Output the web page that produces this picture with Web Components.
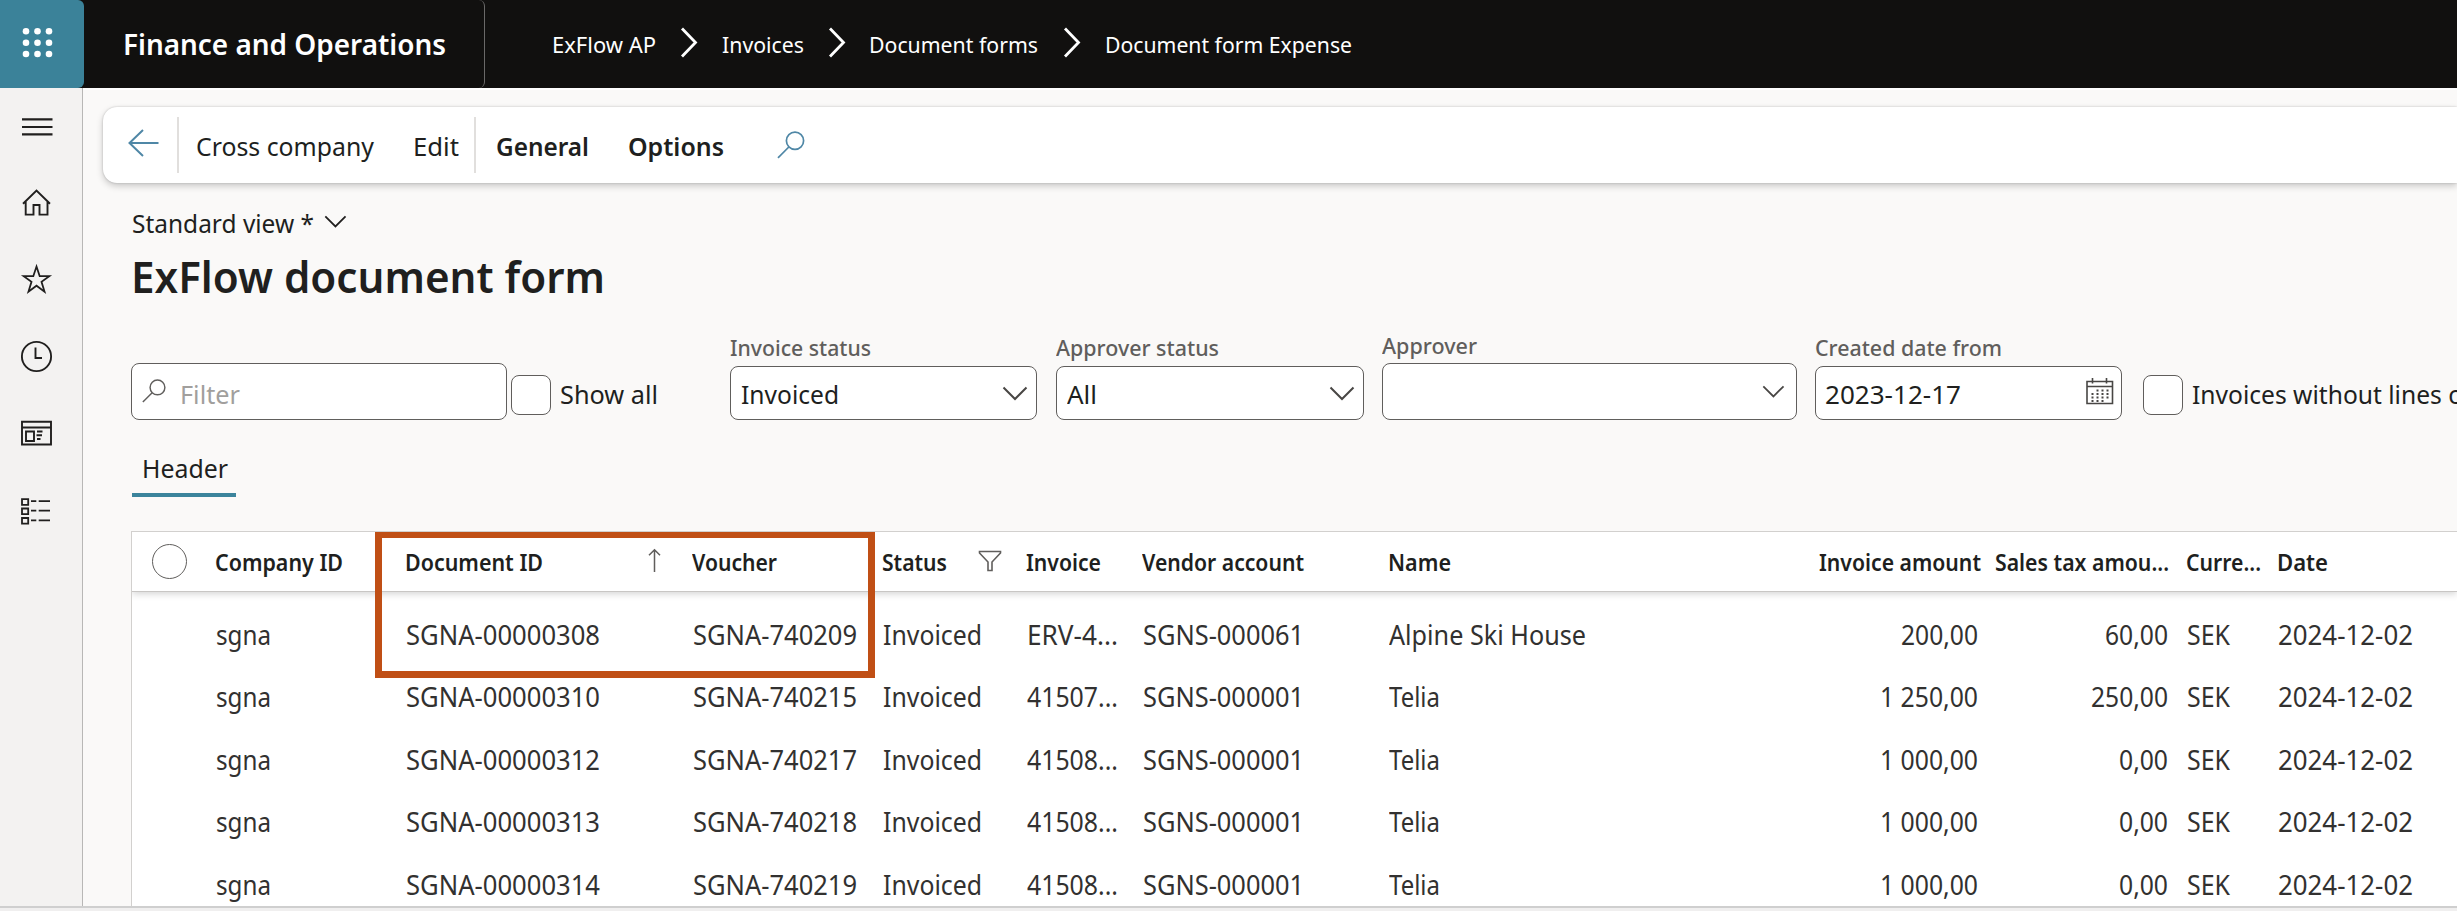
<!DOCTYPE html>
<html lang="en">
<head>
<meta charset="utf-8">
<title>ExFlow document form</title>
<style>
html,body{margin:0;height:100%;overflow:hidden;background:#faf9f8}
body{font-family:"Noto Sans","Open Sans",sans-serif;color:#201f1e}
</style>
</head>
<body>
<exflow-app></exflow-app>
<script>
const define = (name, html, init) => {
  const tpl = document.createElement('template');
  tpl.innerHTML = html;
  customElements.define(name, class extends HTMLElement {
    connectedCallback() {
      if (this.shadowRoot) return;
      this.attachShadow({mode: 'open'}).appendChild(tpl.content.cloneNode(true));
      if (init) init.call(this, this.shadowRoot);
    }
  });
};

/* Single line of text, condensed to a given width (Segoe-like proportions). */
define('ui-text', `<style>
:host{display:block;white-space:nowrap;flex:none;line-height:1.3}
span{display:inline-block;transform-origin:0 50%}
</style><span><slot></slot></span>`, function (root) {
  const size = this.getAttribute('size');
  if (size) this.style.fontSize = size + 'px';
  const weight = this.getAttribute('weight');
  if (weight) this.style.fontWeight = weight;
  const w = +this.getAttribute('w'), span = root.querySelector('span');
  if (w) {
    const natural = span.getBoundingClientRect().width;
    this.style.width = w + 'px';
    span.style.transform = 'scaleX(' + (w / natural) + ')';
  }
});

const ICONS = {
  waffle: [84, 88, '<g fill="#fff"><circle cx="26" cy="31.3" r="3.3"/><circle cx="37.5" cy="31.3" r="3.3"/><circle cx="49" cy="31.3" r="3.3"/><circle cx="26" cy="42.7" r="3.3"/><circle cx="37.5" cy="42.7" r="3.3"/><circle cx="49" cy="42.7" r="3.3"/><circle cx="26" cy="54" r="3.3"/><circle cx="37.5" cy="54" r="3.3"/><circle cx="49" cy="54" r="3.3"/></g>'],
  crumb: [18, 31, '<path d="M2 1.5L15.5 15.5L2 29.500" stroke-width="2.8"/>'],
  menu: [82, 77, '<path d="M22 31.300H52.500M22 39H52.500M22 46.300H52.500" stroke-width="2.200"/>'],
  home: [82, 77, '<path d="M23 38.700L36.500 25.500L50 38.700M25.700 36.500V49.600H33.500V40H39.500V49.600H47.500V36.500" stroke-width="1.900"/>'],
  star: [82, 77, '<path d="M36.500 24.500L39.700 34.200H49.300L41.500 39.800L44.500 49.600L36.500 43.700L28.500 49.600L31.500 39.800L23.700 34.200H33.300Z" stroke-width="1.800"/>'],
  clock: [82, 77, '<circle cx="36.500" cy="37.500" r="14.600" stroke-width="1.900"/><path d="M35.500 28.500V39H42" stroke-width="1.900"/>'],
  news: [82, 77, '<path d="M22 25.800H51V48.500H22ZM22 31.500H51M26 35.500H34V45H26ZM37 35.500H42.500M36.500 39.300H42M37 43H40.500" stroke-width="1.900"/>'],
  list: [82, 77, '<path d="M22 26.200H28.200V31.800H22ZM22 35.500H28.200V41.100H22ZM22 45H28.200V50.600H22ZM31 28.200H36.300M38.700 28.200H50M31 37.600H36.300M38.700 37.600H50M31 47.300H36.300M38.700 47.300H50" stroke-width="1.800"/>'],
  back: [32, 28, '<path d="M15 1L1.500 14L15 27M1.500 14H30.500" stroke-width="2"/>'],
  search: [28, 28, '<circle cx="18" cy="9.800" r="8.600" stroke-width="1.700"/><path d="M11.800 16L1 26.800" stroke-width="1.700"/>'],
  down: [26, 15, '<path d="M1.500 1.500L13 13L24.500 1.500" stroke-width="2"/>'],
  up: [13, 25, '<path d="M6.500 24V2M1 7.300L6.500 1.700L12 7.300" stroke-width="1.500"/>'],
  funnel: [24, 22, '<path d="M1.500 1.500H22.500V3L14 12V20.500H10V12L1.500 3Z" stroke-width="1.600"/>'],
  calendar: [28, 28, '<path d="M1 3.500H26.500V25.500H1ZM1 8.500H26.500M6.500 0V5.500M20.500 0V5.500" stroke-width="1.600"/><g stroke-dasharray="2 3" stroke-width="2"><path d="M10.500 12.500H23M5.500 16H23M5.500 19.500H23M5.500 23H18"/></g>']
};
define('ui-icon', `<style>:host{display:block;flex:none}svg{display:block;fill:none;stroke:currentColor;overflow:visible}</style><svg></svg>`, function (root) {
  const [w, h, body] = ICONS[this.getAttribute('name')];
  const k = +(this.getAttribute('scale') || 1), svg = root.querySelector('svg');
  svg.setAttribute('viewBox', `0 0 ${w} ${h}`);
  svg.setAttribute('width', w * k);
  svg.setAttribute('height', h * k);
  svg.innerHTML = body.replace(/<circle/g, this.getAttribute('name') === 'waffle' ? '<circle stroke="none"' : '<circle');
});

define('app-header', `<style>
:host{display:flex;height:88px;flex:none;background:#11100f;color:#fff;align-items:center}
.waffle{width:84px;height:88px;background:#3b8299;border-radius:0 6px 6px 0}
.brand{box-sizing:border-box;width:401px;height:88px;padding:0 0 1px 39px;display:flex;align-items:center;border-right:1px solid #6a6968;border-radius:0 6px 6px 0}
nav{display:flex;align-items:center;padding-left:67px}
nav ui-text{margin-top:1px}
nav ui-icon{margin-top:-3px}
</style>
<div class="waffle"><ui-icon name="waffle"></ui-icon></div>
<div class="brand"><ui-text size="29" weight="600" w="323">Finance and Operations</ui-text></div>
<nav>
<ui-text size="22.500" w="104">ExFlow AP</ui-text><ui-icon name="crumb" style="margin-left:24px"></ui-icon>
<ui-text size="22.500" w="82" style="margin-left:24px">Invoices</ui-text><ui-icon name="crumb" style="margin-left:24px"></ui-icon>
<ui-text size="22.500" w="169" style="margin-left:23px">Document forms</ui-text><ui-icon name="crumb" style="margin-left:25px"></ui-icon>
<ui-text size="22.500" w="247" style="margin-left:24px">Document form Expense</ui-text>
</nav>`);

define('app-sidebar', `<style>
:host{display:block;box-sizing:border-box;width:83px;flex:none;background:#f3f2f1;border-right:1px solid #b8b7b6;color:#201f1e}
</style>
<ui-icon name="menu"></ui-icon><ui-icon name="home"></ui-icon><ui-icon name="star"></ui-icon>
<ui-icon name="clock"></ui-icon><ui-icon name="news"></ui-icon><ui-icon name="list"></ui-icon>`);

define('action-bar', `<style>
:host{display:flex;align-items:center;box-sizing:border-box;height:76px;margin:19px 0 0 20px;padding-left:25px;background:#fff;border-radius:14px 0 0 14px;box-shadow:0 0 2px rgba(0,0,0,.22),0 3px 7px rgba(0,0,0,.2)}
i{width:2px;height:56px;background:#e1dfdd}
ui-text{margin-top:3px}
ui-icon{color:#4f87a6;margin-top:-1px}
</style>
<ui-icon name="back" style="margin-top:-4px"></ui-icon><i style="margin-left:17px"></i>
<ui-text size="26" w="178" style="margin-left:17px">Cross company</ui-text>
<ui-text size="26" w="46" style="margin-left:39px">Edit</ui-text><i style="margin-left:15px"></i>
<ui-text size="26" weight="600" w="93" style="margin-left:20px">General</ui-text>
<ui-text size="26" weight="600" w="96" style="margin-left:39px">Options</ui-text>
<ui-icon name="search" style="margin-left:53px"></ui-icon>`);

define('check-box', `<style>
:host{display:flex;align-items:center;height:57px;flex:none}
b{box-sizing:border-box;width:40px;height:40px;margin-top:6px;border:1.500px solid #605e5c;border-radius:8px;background:#fff;margin-right:9px}
::slotted(*){margin-top:6px}
</style><b></b><slot></slot>`);

define('form-field', `<style>
:host{display:block;flex:none}
.label{color:#605e5c;display:flex;align-items:center;height:30px;margin-bottom:3px}
.box{box-sizing:border-box;height:var(--h,54px);display:flex;align-items:center;justify-content:space-between;border:1.500px solid #605e5c;border-radius:8px;background:#fff;padding:0 8px 0 9px;color:#201f1e}
.end{color:#484644}
</style>
<div class="label"><slot name="label"></slot></div>
<div class="box"><div><slot></slot></div><div class="end"><slot name="icon"></slot></div></div>`);

define('filter-input', `<style>
:host{box-sizing:border-box;display:flex;align-items:center;width:376px;height:57px;border:1.500px solid #605e5c;border-radius:8px;background:#fff;padding-left:10px;flex:none;color:#a19f9d}
ui-icon{color:#605e5c;margin-right:14px}
ui-text{margin-top:6px}
</style><ui-icon name="search" scale=".86"></ui-icon><ui-text size="26" w="60">Filter</ui-text>`);

define('filter-row', `<style>
:host{display:flex;align-items:flex-end;height:115px}
</style>
<filter-input></filter-input>
<check-box style="margin-left:4px"><ui-text size="26" w="98">Show all</ui-text></check-box>
<form-field style="width:307px;margin-left:72px"><ui-text slot="label" size="22.500" weight="500" w="141">Invoice status</ui-text><ui-text size="26" w="98" style="margin-top:4px;margin-left:1px">Invoiced</ui-text><ui-icon slot="icon" name="down"></ui-icon></form-field>
<form-field style="width:308px;margin-left:19px"><ui-text slot="label" size="22.500" weight="500" w="163">Approver status</ui-text><ui-text size="26" w="30" style="margin-top:4px;margin-left:1px">All</ui-text><ui-icon slot="icon" name="down"></ui-icon></form-field>
<form-field style="width:415px;margin-left:18px;--h:57px"><ui-text slot="label" size="22.500" weight="500" w="95" style="margin-top:2px">Approver</ui-text><ui-icon slot="icon" name="down" scale=".88" style="margin-right:3px"></ui-icon></form-field>
<form-field style="width:307px;margin-left:18px"><ui-text slot="label" size="22.500" weight="500" w="187">Created date from</ui-text><ui-text size="26" w="136" style="margin-top:4px">2023-12-17</ui-text><ui-icon slot="icon" name="calendar" style="margin:-3px -1px 0 0"></ui-icon></form-field>
<check-box style="margin-left:21px"><ui-text size="26" w="268">Invoices without lines c</ui-text></check-box>`);

const COLS = [
  ['Company ID', 128], ['Document ID', 138, 'up', 105], ['Voucher', 85],
  ['Status', 65, 'funnel', 31], ['Invoice', 75], ['Vendor account', 162],
  ['Name', 63], ['Invoice amount', 162], ['Sales tax amou...', 174],
  ['Curre...', 75], ['Date', 51]
];
const ROWS = [
  ['sgna', 'SGNA-00000308', 'SGNA-740209', 'Invoiced', 'ERV-4...', 'SGNS-000061', 'Alpine Ski House', '200,00', '60,00', 'SEK', '2024-12-02'],
  ['sgna', 'SGNA-00000310', 'SGNA-740215', 'Invoiced', '41507...', 'SGNS-000001', 'Telia', '1 250,00', '250,00', 'SEK', '2024-12-02'],
  ['sgna', 'SGNA-00000312', 'SGNA-740217', 'Invoiced', '41508...', 'SGNS-000001', 'Telia', '1 000,00', '0,00', 'SEK', '2024-12-02'],
  ['sgna', 'SGNA-00000313', 'SGNA-740218', 'Invoiced', '41508...', 'SGNS-000001', 'Telia', '1 000,00', '0,00', 'SEK', '2024-12-02'],
  ['sgna', 'SGNA-00000314', 'SGNA-740219', 'Invoiced', '41508...', 'SGNS-000001', 'Telia', '1 000,00', '0,00', 'SEK', '2024-12-02']
];
const WIDTHS = {'200,00': 77, '60,00': 63, '250,00': 77, '1 250,00': 98, '1 000,00': 98, '0,00': 49, 'Alpine Ski House': 197, 'Telia': 51};
const CELLW = [55, 194, 164, 99, 91, 161, 0, 0, 0, 43, 135];

define('data-grid', `<style>
:host{display:block;position:relative;margin-top:34px;border-left:1px solid #d2d0ce;border-top:1px solid #d2d0ce;background:#fff;flex:1;min-height:0;overflow:hidden;box-sizing:border-box}
.row{display:grid;grid-template-columns:83px 190px 287px 190px 144px 116px 246px 431px 176px 191px 91px 1fr;align-items:center;height:62.400px;color:#323130}
.head{height:59px;border-bottom:1px solid #c8c6c4;box-shadow:0 2px 7px rgba(0,0,0,.17);margin-bottom:12px;color:#201f1e}
.cell{display:flex;align-items:center}
.num{justify-content:flex-end}
.head .num{justify-content:flex-start}
.head ui-text{margin-top:2px}
.radio{box-sizing:border-box;width:35px;height:35px;border:1.500px solid #605e5c;border-radius:50%;margin-left:20px;margin-top:-1px}
.cell ui-icon{color:#605e5c;margin-top:-2px}
.mark{position:absolute;left:243px;top:-1px;width:486px;height:133px;border:7px solid #c04f15}
</style><div class="row head"><div class="radio"></div></div><div class="mark"></div>`, function (root) {
  const head = root.querySelector('.head');
  const mark = root.querySelector('.mark');
  head.insertAdjacentHTML('beforeend', COLS.map(([t, w, icon, gap]) =>
    `<div class="cell"><ui-text size="22.500" weight="560" w="${w}">${t}</ui-text>${icon ? `<ui-icon name="${icon}" style="margin-left:${gap}px"></ui-icon>` : ''}</div>`).join(''));
  ROWS.forEach(r => mark.insertAdjacentHTML('beforebegin', '<div class="row"><div></div>' + r.map((t, i) => {
    const num = i === 7 || i === 8;
    const pad = i === 7 ? 'padding-right:17px' : i === 8 ? 'padding-right:18px' : 'padding-left:1px';
    return `<div class="cell${num ? ' num' : ''}" style="${pad}"><ui-text size="26.500" w="${CELLW[i] || WIDTHS[t]}">${t}</ui-text></div>`;
  }).join('') + '</div>'));
});

define('document-page', `<style>
:host{display:flex;flex-direction:column;flex:1;min-width:0;overflow:hidden;background:#faf9f8;box-sizing:border-box;box-shadow:inset 0 2px #fff}
.content{padding-left:48px;display:flex;flex-direction:column;flex:1;min-height:0}
.view{display:flex;align-items:center;height:36px;margin-top:21px;gap:10px}
.title{display:flex;align-items:center;height:60px;margin-top:5px}
.tab{width:104px;height:45px;margin:28px 0 0 1px;border-bottom:4px solid #3b849c}
.tab ui-text{line-height:40px;margin-left:10px}
</style>
<action-bar></action-bar>
<div class="content">
<div class="view"><ui-text size="25.500" w="182" style="margin:3px 0 0 1px">Standard view *</ui-text><ui-icon name="down" scale=".88"></ui-icon></div>
<div class="title"><ui-text size="44" weight="580" w="474" style="margin-top:3px">ExFlow document form</ui-text></div>
<filter-row></filter-row>
<div class="tab"><ui-text size="26" w="86">Header</ui-text></div>
<data-grid></data-grid>
</div>`);

define('exflow-app', `<style>
:host{display:flex;flex-direction:column;height:911px;overflow:hidden}
main{display:flex;flex:1;min-height:0}
footer{height:3px;flex:none;background:#f0efef;border-top:2px solid #cfcfcf}
</style><app-header></app-header><main><app-sidebar></app-sidebar><document-page></document-page></main><footer></footer>`);
</script>
</body>
</html>
